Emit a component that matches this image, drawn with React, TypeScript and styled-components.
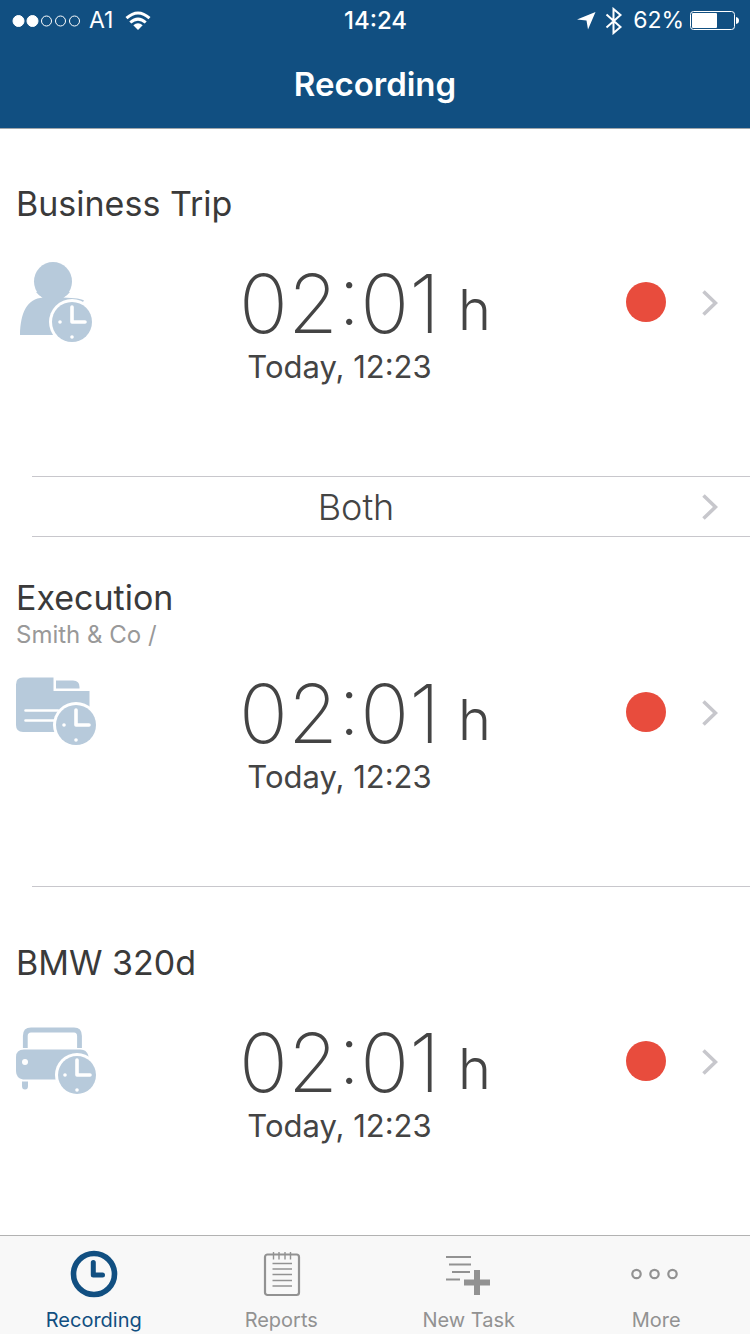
import React from "react";
import styled, { createGlobalStyle } from "styled-components";

const GlobalStyle = createGlobalStyle`
  *, *::before, *::after { box-sizing: border-box; }
  body {
    margin: 0;
    background: #fff;
    color: #444;
    font-family: Inter, "Liberation Sans", sans-serif;
  }
  button { font: inherit; color: inherit; }
`;

const Screen = styled.div`
  display: flex;
  flex-direction: column;
  min-height: 100vh;
`;

const Header = styled.header`
  display: flex;
  flex-direction: column;
  height: 128px;
  background: #114f81;
  box-shadow: 0 1px 0 #a0a6ab;
  color: #fff;
`;

const StatusBar = styled.div`
  display: grid;
  grid-template-columns: 1fr auto 1fr;
  align-items: center;
  height: 41px;
  padding: 0 11px 0 12px;
  font-size: 23px;
  line-height: 41px;
`;

const StatusGroup = styled.div<{ $end?: boolean }>`
  display: flex;
  align-items: center;
  justify-content: ${(p) => (p.$end ? "flex-end" : "flex-start")};
  gap: ${(p) => (p.$end ? "6px" : "8px")};
`;

const Carrier = styled.span`
  margin-right: 4px;
`;

const Clock = styled.time`
  font-size: 24px;
  font-weight: 500;
`;

const BatteryLevel = styled.span`
  margin-left: 4px;
`;

const NavTitle = styled.h1`
  margin: 0;
  font-size: 33px;
  font-weight: 600;
  line-height: 87px;
  text-align: center;
`;

const Main = styled.main`
  flex: 1;
`;

const Cell = styled.section<{ $divided?: boolean }>`
  padding: 40px 0 0 16px;

  &::after {
    content: "";
    display: block;
    height: ${(p) => (p.$divided ? "1px" : "0")};
    margin-left: 16px;
    background: #c8c7cc;
  }
`;

const Heading = styled.div`
  display: flex;
  flex-direction: column;
  justify-content: center;
  min-height: 72px;
`;

const TaskName = styled.h2`
  margin: 0;
  color: #3a3a3a;
  font-size: 34px;
  font-weight: 400;
  line-height: 42px;
`;

const Customer = styled.p`
  margin: 0;
  color: #999;
  font-size: 24px;
  line-height: 31px;
`;

const CellBody = styled.div`
  display: grid;
  grid-template-columns: 80px 1fr 40px 16px;
  column-gap: 36px;
  padding: 22px 32px 86px 0;
`;

const Timer = styled.div`
  display: grid;
  grid-template-columns: auto auto;
  justify-content: center;
  column-gap: 18px;
  margin: 0 -44px 0 -36px;
  padding-top: 2px;
`;

const Duration = styled.span`
  font-size: 81px;
  font-weight: 200;
  line-height: 80px;
`;

const Unit = styled.span`
  align-self: end;
  font-size: 56px;
  font-weight: 300;
  line-height: 68px;
`;

const Started = styled.span`
  font-size: 31px;
  line-height: 46px;
  text-align: center;
`;

const RecordButton = styled.button`
  width: 40px;
  height: 40px;
  margin-top: 20px;
  padding: 0;
  border: 0;
  border-radius: 50%;
  background: #e84c3d;
`;

const DetailButton = styled.button`
  display: flex;
  align-items: center;
  height: 82px;
  padding: 0;
  border: 0;
  background: none;
`;

const BothButton = styled.button`
  display: grid;
  grid-template-columns: 1fr 16px;
  align-items: center;
  column-gap: 22px;
  width: calc(100% - 32px);
  height: 60px;
  margin-left: 32px;
  padding: 0 32px 0 0;
  border: 0;
  border-bottom: 1px solid #c8c7cc;
  background: none;
  font-size: 36px;
  font-weight: 300;
  text-align: center;
`;

const TabBar = styled.nav`
  position: sticky;
  bottom: 0;
  display: grid;
  grid-template-columns: repeat(4, 1fr);
  height: 99px;
  border-top: 1px solid #b2b2b2;
  background: #f8f8f8;
`;

const Tab = styled.a<{ $active?: boolean }>`
  display: flex;
  flex-direction: column;
  align-items: center;
  gap: 10px;
  padding-top: 14px;
  color: ${(p) => (p.$active ? "#114f81" : "#929292")};
  font-size: 20px;
  line-height: 24px;
  text-decoration: none;
`;

const Chevron = () => (
  <svg width="16" height="26" viewBox="0 0 16 26" fill="none" aria-hidden="true">
    <path d="M1.5 1.5 13.5 13 1.5 24.5" stroke="#c7c7cc" strokeWidth="3.6" />
  </svg>
);

const ClockBadge = ({ cx, cy, r }: { cx: number; cy: number; r: number }) => (
  <g>
    <circle cx={cx} cy={cy} r={r + 3} fill="#fff" />
    <circle cx={cx} cy={cy} r={r} fill="#b7cadb" />
    <path
      d={`M${cx} ${cy - 15}V${cy}H${cx + 13}`}
      fill="none"
      stroke="#fff"
      strokeWidth="3.6"
      strokeLinecap="round"
      strokeLinejoin="round"
    />
    <circle cx={cx - 12} cy={cy} r="1.8" fill="#fff" />
    <circle cx={cx} cy={cy + 15} r="1.8" fill="#fff" />
  </g>
);

const PersonIcon = () => (
  <svg width="80" height="80" viewBox="0 0 80 80" aria-hidden="true">
    <g fill="#b7cadb">
      <ellipse cx="37" cy="19.500" rx="19" ry="19.500" />
      <path d="M20 30Q23 34 27 35.500C11 37 4.500 50 4 73H44L68 38.500Q65 36 47 35.500Q51 34 54 30Z" />
    </g>
    <ClockBadge cx={56} cy={60} r={20} />
  </svg>
);

const FolderIcon = () => (
  <svg width="80" height="80" viewBox="0 0 80 80" aria-hidden="true">
    <path
      d="M7 5.500H37.500V19H73.500V60H7Q0 60 0 53V12.500Q0 5.500 7 5.500Z"
      fill="#b7cadb"
    />
    <path d="M40 8.500H57Q63.500 8.500 63.500 15V16.500H40Z" fill="#b7cadb" />
    <path d="M9.500 38.500H42M9.500 48.500H42" stroke="#fff" strokeWidth="2.600" strokeLinecap="round" />
    <ClockBadge cx={60} cy={53} r={20} />
  </svg>
);

const CarIcon = () => (
  <svg width="80" height="80" viewBox="0 0 80 80" aria-hidden="true">
    <path
      d="M9.300 27V15Q9.300 9 15 9H58Q63.500 9 63.500 15V27"
      fill="none"
      stroke="#b7cadb"
      strokeWidth="4.800"
    />
    <path
      d="M8 28.500H64Q73 28.500 73 40V58.500H7Q0 57 0 50V36Q0 28.500 8 28.500Z"
      fill="#b7cadb"
    />
    <path d="M6 60.500H12V65Q12 68.500 9 68.500T6 65Z" fill="#b7cadb" />
    <circle cx="9" cy="41" r="3" fill="#fff" />
    <ClockBadge cx={61} cy={54} r={19} />
  </svg>
);

const WifiIcon = () => (
  <svg width="26" height="20" viewBox="0 0 26 20" fill="none" aria-hidden="true">
    <path d="M1.500 7.200Q13-3.200 24.500 7.200M5.300 11.500Q13 4.700 20.700 11.500" stroke="#fff" strokeWidth="3" />
    <path d="M8.300 14.300Q13 10.300 17.700 14.300L13 19Z" fill="#fff" />
  </svg>
);

const SignalIcon = () => (
  <svg width="69" height="14" viewBox="0 0 69 14" fill="none" aria-hidden="true">
    {[0, 1, 2, 3, 4].map((i) => (
      <circle
        key={i}
        cx={6.5 + i * 14}
        cy="7"
        r={i < 2 ? 5.5 : 5}
        fill={i < 2 ? "#fff" : "none"}
        stroke="#fff"
      />
    ))}
  </svg>
);

const LocationIcon = () => (
  <svg width="22" height="20" viewBox="0 0 22 20" aria-hidden="true">
    <path d="M18.500 1 11 18.500 9.500 9.500 0 8.500Z" fill="#fff" />
  </svg>
);

const BluetoothIcon = () => (
  <svg width="18" height="28" viewBox="0 0 18 28" fill="none" aria-hidden="true">
    <path d="M1.500 7.500 15.500 20 8.500 26V2L15.500 8 1.500 20.500" stroke="#fff" strokeWidth="2" />
  </svg>
);

const BatteryIcon = () => (
  <svg width="49" height="20" viewBox="0 0 49 20" aria-hidden="true">
    <rect x="0.500" y="0.500" width="44" height="18" rx="3" fill="none" stroke="#fff" />
    <rect x="2" y="2" width="25" height="15" rx="1" fill="#fff" />
    <path d="M46 6Q49 6.500 49 9.500T46 13Z" fill="#fff" />
  </svg>
);

const RecordingIcon = () => (
  <svg width="48" height="48" viewBox="0 0 48 48" fill="none" stroke="currentColor" aria-hidden="true">
    <circle cx="24" cy="24" r="20.500" strokeWidth="5.600" />
    <path d="M23.300 12.500V25H32.500" strokeWidth="5" strokeLinecap="round" strokeLinejoin="round" />
  </svg>
);

const ReportsIcon = () => (
  <svg width="48" height="48" viewBox="0 0 48 48" fill="none" stroke="currentColor" aria-hidden="true">
    <rect x="8" y="4.500" width="34" height="40.500" rx="2.500" strokeWidth="2.200" />
    <path
      d="M16.500 2V9.500M22 2V9.500M28 2V9.500M33.500 2V9.500M15.500 13.500H35M15.500 19H35M15.500 24.500H35M15.500 30.500H35M15.500 36H35"
      strokeWidth="1.400"
    />
  </svg>
);

const NewTaskIcon = () => (
  <svg width="48" height="48" viewBox="0 0 48 48" fill="none" stroke="currentColor" aria-hidden="true">
    <path d="M1 7H26M4 14.500H26M7 22H25M1 29.500H15" strokeWidth="2" />
    <path d="M32 20V45M19 32.500H45" strokeWidth="6" />
  </svg>
);

const MoreIcon = () => (
  <svg width="50" height="48" viewBox="0 0 50 48" fill="none" stroke="currentColor" strokeWidth="2.200" aria-hidden="true">
    <circle cx="5.500" cy="24" r="4.200" />
    <circle cx="23.500" cy="24" r="4.200" />
    <circle cx="41.500" cy="24" r="4.200" />
  </svg>
);

interface RecordingProps {
  name: string;
  customer?: string;
  icon: React.ReactNode;
  divided?: boolean;
}

const Recording = ({ name, customer, icon, divided }: RecordingProps) => (
  <Cell $divided={divided}>
    <Heading>
      <TaskName>{name}</TaskName>
      {customer && <Customer>{customer}</Customer>}
    </Heading>
    <CellBody>
      {icon}
      <Timer>
        <Duration>02:01</Duration>
        <Unit>h</Unit>
        <Started>Today, 12:23</Started>
      </Timer>
      <RecordButton type="button" aria-label={`Stop recording ${name}`} />
      <DetailButton type="button" aria-label={`Details of ${name}`}>
        <Chevron />
      </DetailButton>
    </CellBody>
  </Cell>
);

export default function App() {
  return (
    <Screen>
      <GlobalStyle />
      <Header>
        <StatusBar>
          <StatusGroup>
            <SignalIcon />
            <Carrier>A1</Carrier>
            <WifiIcon />
          </StatusGroup>
          <Clock>14:24</Clock>
          <StatusGroup $end>
            <LocationIcon />
            <BluetoothIcon />
            <BatteryLevel>62%</BatteryLevel>
            <BatteryIcon />
          </StatusGroup>
        </StatusBar>
        <NavTitle>Recording</NavTitle>
      </Header>
      <Main>
        <Recording name="Business Trip" icon={<PersonIcon />} divided />
        <BothButton type="button">
          <span>Both</span>
          <Chevron />
        </BothButton>
        <Recording name="Execution" customer="Smith &amp; Co /" icon={<FolderIcon />} divided />
        <Recording name="BMW 320d" icon={<CarIcon />} />
      </Main>
      <TabBar>
        <Tab href="#recording" $active aria-current="page">
          <RecordingIcon />
          Recording
        </Tab>
        <Tab href="#reports">
          <ReportsIcon />
          Reports
        </Tab>
        <Tab href="#new-task">
          <NewTaskIcon />
          New Task
        </Tab>
        <Tab href="#more">
          <MoreIcon />
          More
        </Tab>
      </TabBar>
    </Screen>
  );
}
